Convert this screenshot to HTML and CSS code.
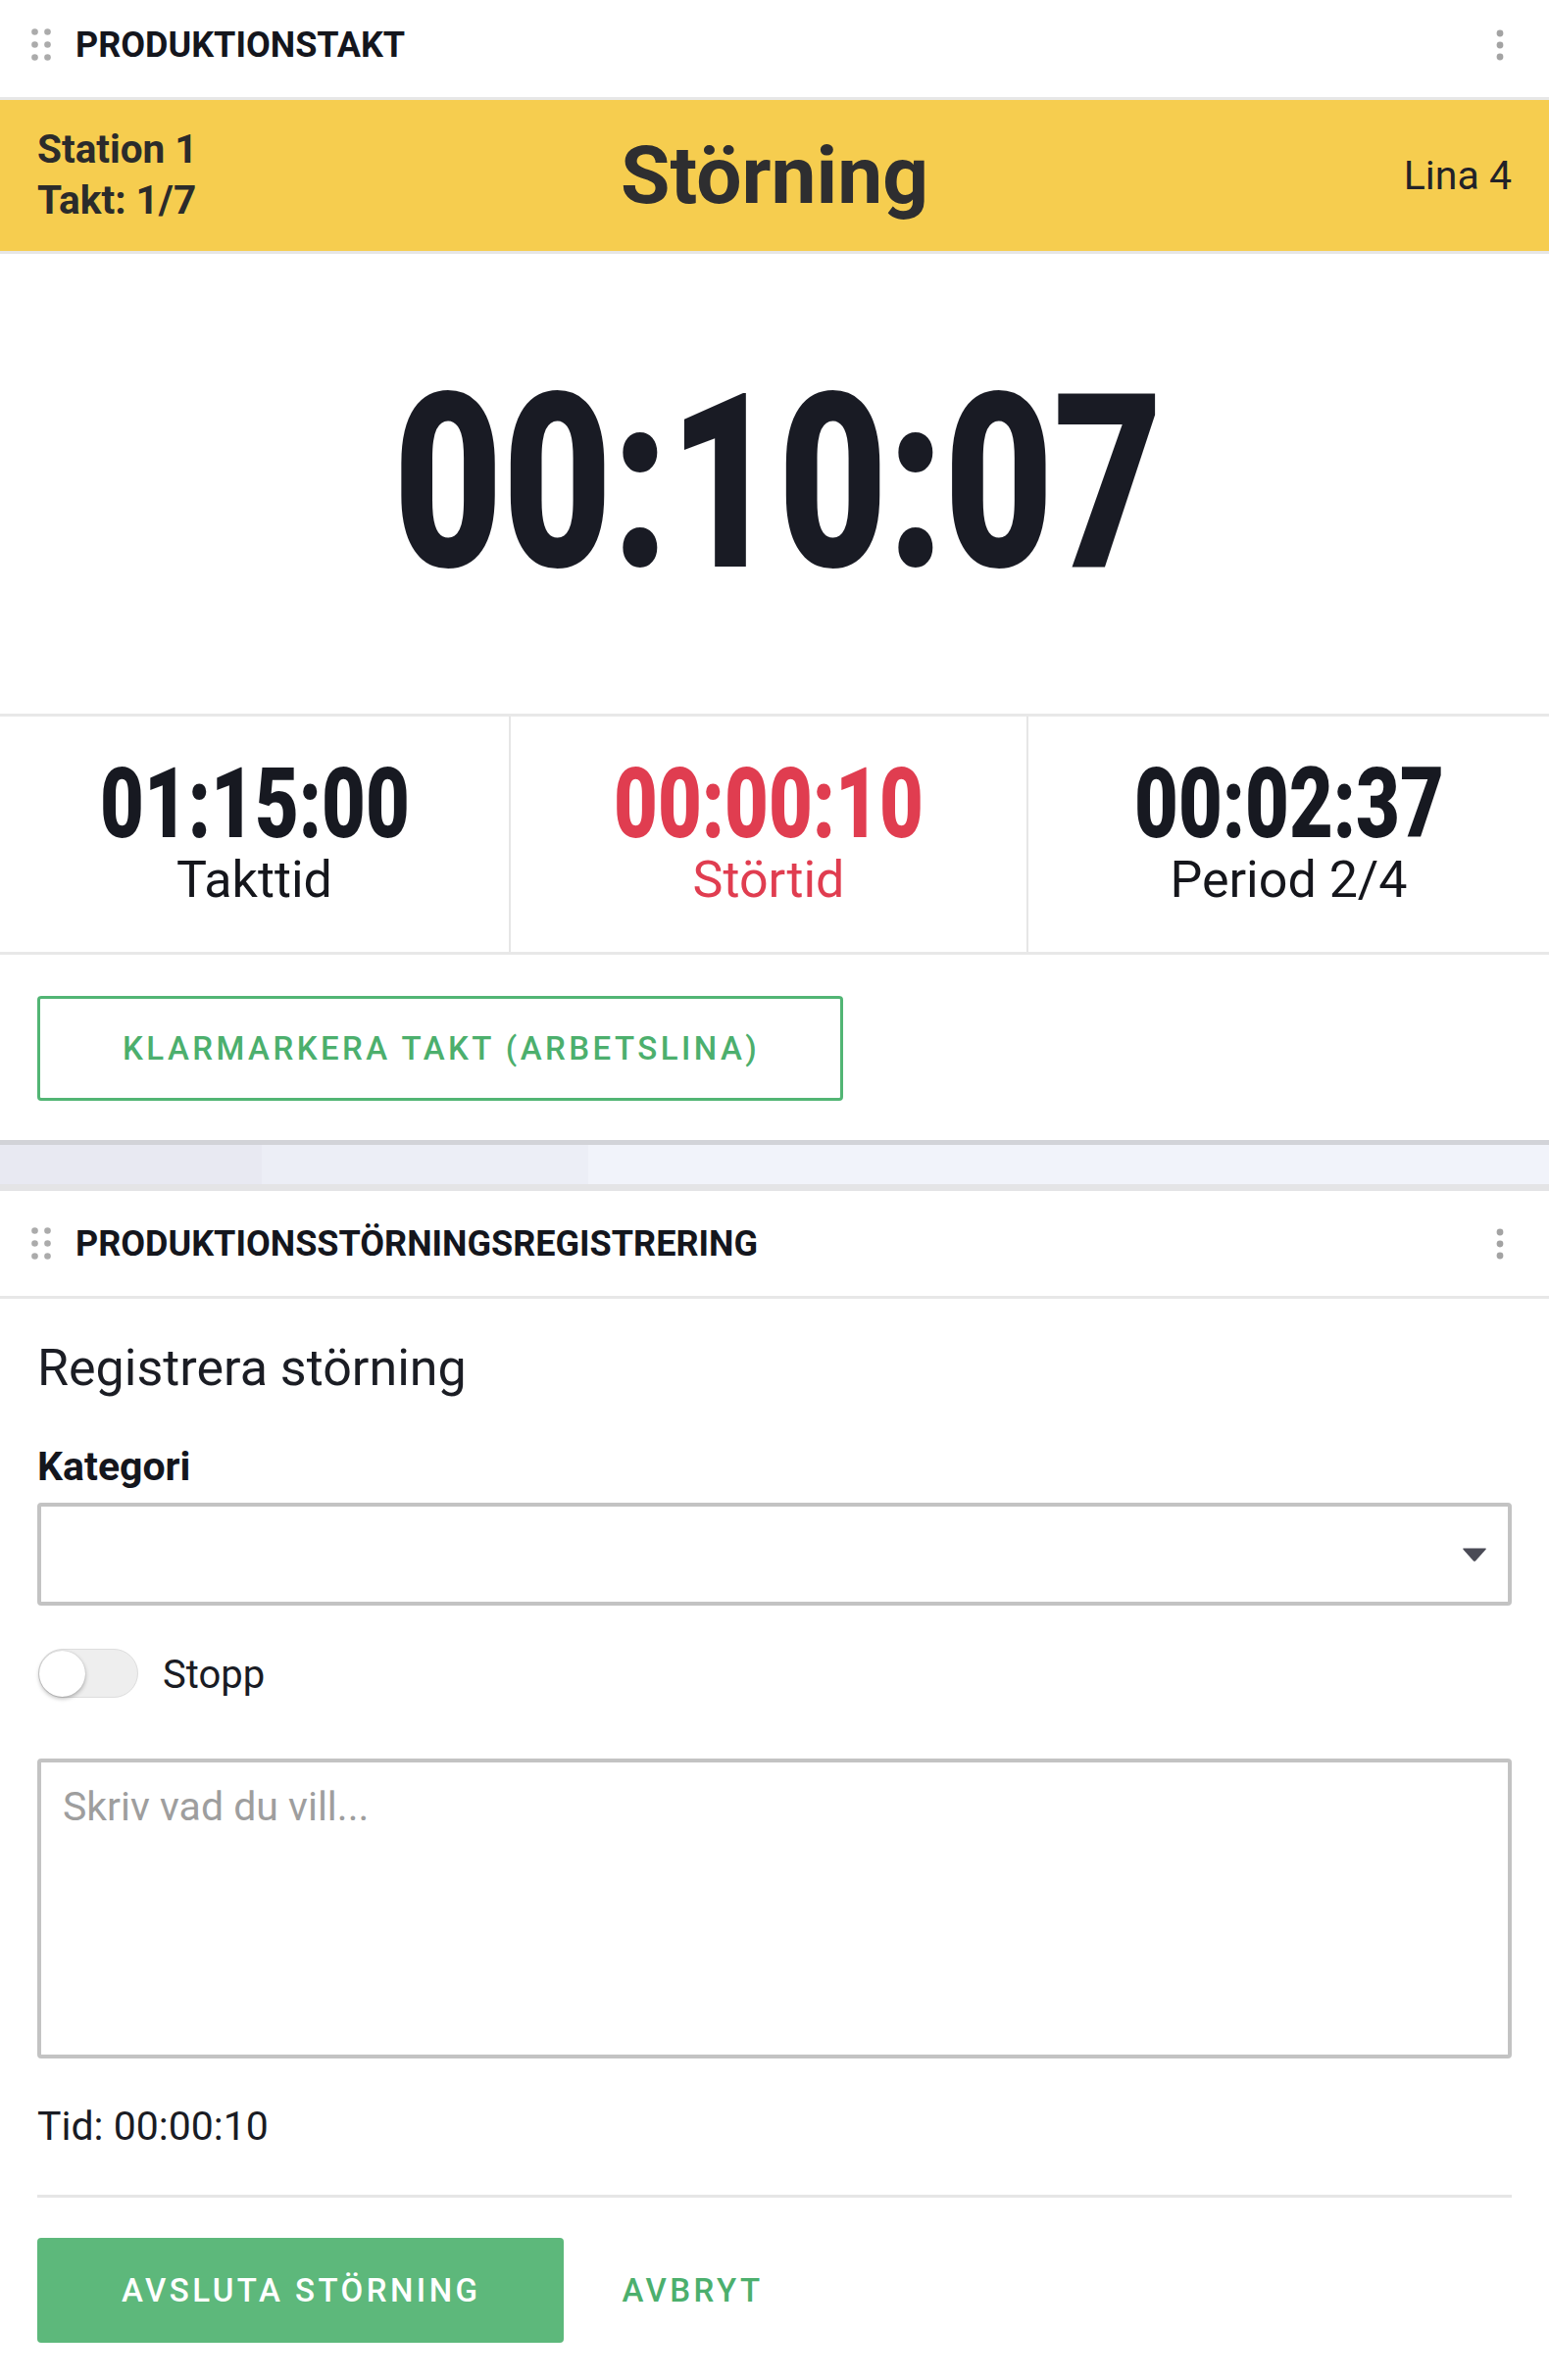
FILE: index.html
```html
<!DOCTYPE html>
<html lang="sv">
<head>
<meta charset="utf-8">
<title>Produktionstakt</title>
<link rel="stylesheet" href="styles.css">
</head>
<body>
<div class="page">
  <section class="widget">
    <header class="widget-head widget-head--first">
      <span class="drag">
        <svg width="20" height="33" viewBox="0 0 20 33"><circle cx="3.5" cy="3.5" r="3.3"/><circle cx="16.5" cy="3.5" r="3.3"/><circle cx="3.5" cy="16.5" r="3.3"/><circle cx="16.5" cy="16.5" r="3.3"/><circle cx="3.5" cy="29.5" r="3.3"/><circle cx="16.5" cy="29.5" r="3.3"/></svg>
      </span>
      <h2 class="widget-title">PRODUKTIONSTAKT</h2>
      <span class="kebab">
        <svg width="8" height="32" viewBox="0 0 8 32"><circle cx="4" cy="4" r="3.4"/><circle cx="4" cy="16" r="3.4"/><circle cx="4" cy="28" r="3.4"/></svg>
      </span>
    </header>
    <div class="status-bar">
      <div class="status-left">
        <div>Station 1</div>
        <div>Takt: 1/7</div>
      </div>
      <div class="status-title">Störning</div>
      <div class="status-right">Lina 4</div>
    </div>
    <div class="main-timer"><span class="cond cond--big">00:10:07</span></div>
    <div class="stats">
      <div class="stat">
        <div class="stat-value"><span class="cond">01:15:00</span></div>
        <div class="stat-label">Takttid</div>
      </div>
      <div class="stat stat--alert">
        <div class="stat-value"><span class="cond">00:00:10</span></div>
        <div class="stat-label">Störtid</div>
      </div>
      <div class="stat">
        <div class="stat-value"><span class="cond">00:02:37</span></div>
        <div class="stat-label">Period 2/4</div>
      </div>
    </div>
    <div class="takt-actions">
      <button class="btn btn-outline" type="button">KLARMARKERA TAKT (ARBETSLINA)</button>
    </div>
  </section>

  <div class="gap-band">
    <span class="seg seg-1"></span>
    <span class="seg seg-2"></span>
    <span class="seg seg-3"></span>
  </div>

  <section class="widget">
    <header class="widget-head">
      <span class="drag">
        <svg width="20" height="33" viewBox="0 0 20 33"><circle cx="3.5" cy="3.5" r="3.3"/><circle cx="16.5" cy="3.5" r="3.3"/><circle cx="3.5" cy="16.5" r="3.3"/><circle cx="16.5" cy="16.5" r="3.3"/><circle cx="3.5" cy="29.5" r="3.3"/><circle cx="16.5" cy="29.5" r="3.3"/></svg>
      </span>
      <h2 class="widget-title">PRODUKTIONSSTÖRNINGSREGISTRERING</h2>
      <span class="kebab">
        <svg width="8" height="32" viewBox="0 0 8 32"><circle cx="4" cy="4" r="3.4"/><circle cx="4" cy="16" r="3.4"/><circle cx="4" cy="28" r="3.4"/></svg>
      </span>
    </header>
    <div class="form">
      <h3 class="form-title">Registrera störning</h3>
      <label class="field-label">Kategori</label>
      <div class="select">
        <svg class="select-caret" width="26" height="16" viewBox="0 0 26 16"><path d="M2 1.5 H24 Q25.5 1.5 24.5 2.8 L14.2 14.2 Q13 15.5 11.8 14.2 L1.5 2.8 Q0.5 1.5 2 1.5 Z"/></svg>
      </div>
      <div class="toggle-row">
        <span class="toggle"><span class="toggle-knob"></span></span>
        <span class="toggle-label">Stopp</span>
      </div>
      <div class="textarea"><span class="placeholder">Skriv vad du vill...</span></div>
      <div class="duration">Tid: 00:00:10</div>
      <hr class="divider">
      <div class="form-actions">
        <button class="btn btn-filled" type="button">AVSLUTA STÖRNING</button>
        <button class="btn btn-text" type="button">AVBRYT</button>
      </div>
    </div>
  </section>
</div>
</body>
</html>
```

FILE: styles.css
```css
* { box-sizing: border-box; }

body {
  margin: 0;
  font-family: Roboto, "Noto Sans", "Liberation Sans", sans-serif;
  color: #1a1c24;
  background: #ffffff;
}

.page {
  width: 1580px;
}

.widget {
  background: #ffffff;
}

/* Widget header */
.widget-head {
  display: flex;
  align-items: center;
  height: 110px;
  border-bottom: 3px solid #e7e7e7;
}

.widget-head--first {
  height: 102px;
  padding-bottom: 8px;
}

.drag {
  display: flex;
  margin-left: 32px;
  fill: #ababab;
}

.widget-title {
  margin: 0 0 0 25px;
  font-size: 36px;
  font-weight: 700;
  color: #14161d;
  letter-spacing: 0;
  flex: 1;
}

.kebab {
  display: flex;
  margin-right: 46px;
  fill: #a3a3a3;
}

/* Status bar */
.status-bar {
  display: grid;
  grid-template-columns: 1fr auto 1fr;
  align-items: center;
  height: 157px;
  padding: 0 38px;
  background: #f6cd4f;
  border-bottom: 3px solid #e6e6e6;
  color: #2b2b2b;
}

.status-left {
  font-size: 40.5px;
  font-weight: 700;
  line-height: 52px;
  margin-top: -2px;
}

.status-title {
  font-size: 82px;
  font-weight: 700;
  line-height: 1;
  color: #2e2e30;
}

.status-right {
  justify-self: end;
  font-size: 41px;
  line-height: 1;
  color: #222228;
}

.cond {
  display: inline-block;
  transform: scaleX(0.767);
  transform-origin: center;
}

.cond--big {
  transform: scaleX(0.776);
  margin-left: 8px;
}

/* Main timer */
.main-timer {
  display: flex;
  align-items: center;
  justify-content: center;
  height: 472px;
  border-bottom: 3px solid #e8e8e8;
  font-size: 248px;
  font-weight: 900;
  line-height: 1;
  color: #191b24;
}

/* Stats */
.stats {
  display: grid;
  grid-template-columns: 519px 528px 1fr;
  height: 243px;
  border-bottom: 3px solid #e8e8e8;
}

.stat {
  display: flex;
  flex-direction: column;
  align-items: center;
  justify-content: center;
  border-left: 2px solid #e6e6e6;
  color: #171921;
}

.stat:first-child {
  border-left: 0;
}

.stat-value {
  font-size: 101px;
  font-weight: 900;
  line-height: 94px;
}

.stat-label {
  font-size: 52px;
  line-height: 62px;
  color: #15161c;
}

.stat--alert .stat-value,
.stat--alert .stat-label {
  color: #e03d50;
}

/* Buttons */
.takt-actions {
  padding: 42px 38px 40px;
}

.btn {
  font-family: inherit;
  font-size: 33px;
  font-weight: 500;
  letter-spacing: 0.105em;
  height: 107px;
  border-radius: 4px;
  cursor: pointer;
}

.btn-outline {
  padding: 0 82px 0 84px;
  background: #ffffff;
  border: 3px solid #52b574;
  color: #4caf6d;
}

.btn-filled {
  padding: 0 85px 0 86px;
  background: #5db87b;
  border: 0;
  color: #ffffff;
}

.btn-text {
  margin-left: 22px;
  padding: 0 37px;
  background: transparent;
  border: 0;
  color: #4caf6d;
}

/* Gap between widgets */
.gap-band {
  display: flex;
  height: 52px;
  border-top: 5px solid #d2d3d8;
  border-bottom: 7px solid #e4e4e6;
}

.seg { display: block; height: 100%; }
.seg-1 { width: 267px; background: #e8e9f2; }
.seg-2 { width: 333px; background: #eceef6; }
.seg-3 { flex: 1; background: #f1f3fa; }

/* Form */
.form {
  padding: 0 38px;
}

.form-title {
  margin: 41px 0 0;
  font-size: 52px;
  font-weight: 400;
  line-height: 60px;
  color: #1b1d24;
}

.field-label {
  display: block;
  margin-top: 46px;
  font-size: 41px;
  font-weight: 700;
  line-height: 48px;
  color: #14161d;
}

.select {
  display: flex;
  align-items: center;
  justify-content: flex-end;
  margin-top: 13px;
  height: 105px;
  border: 4px solid #c3c3c3;
  border-radius: 4px;
  padding-right: 21px;
}

.select-caret {
  fill: #4a4b56;
}

.toggle-row {
  display: flex;
  align-items: center;
  margin-top: 44px;
  height: 50px;
}

.toggle {
  position: relative;
  display: block;
  width: 102px;
  height: 50px;
  margin-left: 1px;
  border-radius: 25px;
  background: #eeeeee;
  border: 1px solid #dddddd;
}

.toggle-knob {
  position: absolute;
  left: 0;
  top: 1px;
  width: 47px;
  height: 47px;
  border-radius: 50%;
  background: #ffffff;
  box-shadow: 0 2px 4px rgba(0, 0, 0, 0.28), 0 0 1px rgba(0, 0, 0, 0.2);
}

.toggle-label {
  margin-left: 25px;
  padding-top: 4px;
  font-size: 40px;
  line-height: 50px;
  color: #1a1c24;
}

.textarea {
  margin-top: 62px;
  height: 306px;
  border: 4px solid #c3c3c3;
  border-radius: 4px;
  padding: 21px 22px;
}

.placeholder {
  font-size: 41px;
  line-height: 48px;
  color: #9e9e9e;
}

.duration {
  margin-top: 45px;
  font-size: 41px;
  line-height: 48px;
  color: #1a1c24;
}

.divider {
  margin: 46px 0 0;
  border: 0;
  border-top: 3px solid #e6e6e6;
}

.form-actions {
  display: flex;
  align-items: center;
  margin-top: 41px;
}
```
